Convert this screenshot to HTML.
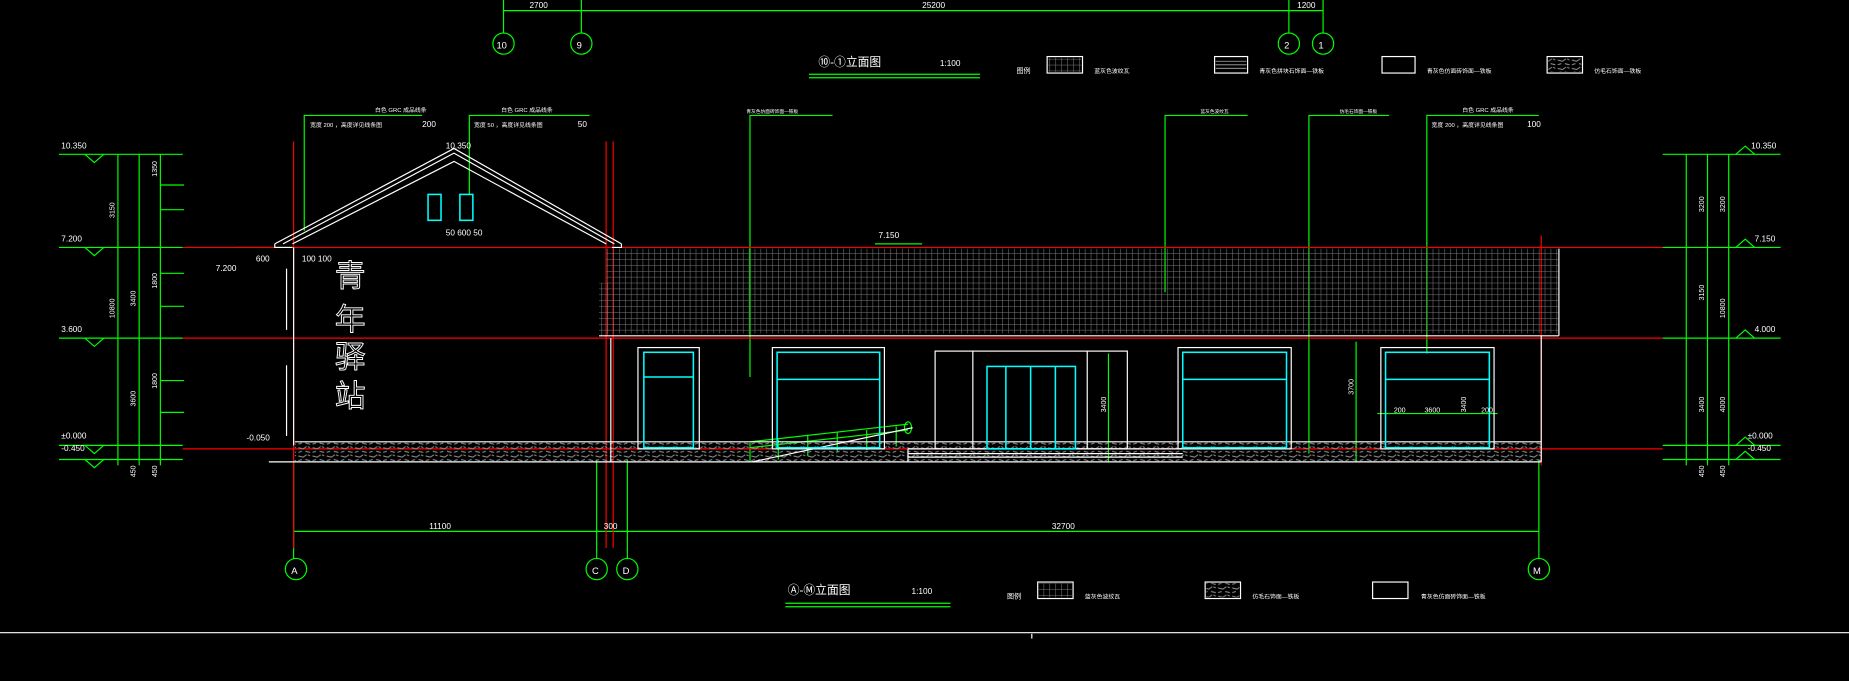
<!DOCTYPE html>
<html><head><meta charset="utf-8"><style>
html,body{margin:0;padding:0;background:#000;width:1849px;height:681px;overflow:hidden}
svg{display:block}
text{font-family:"Liberation Sans Narrow","Liberation Sans","Noto Sans CJK SC",sans-serif;}
</style></head><body>
<svg width="1849" height="681" viewBox="0 0 1568 578" preserveAspectRatio="none" xmlns="http://www.w3.org/2000/svg">
<defs>
<pattern id="tile" width="5" height="5" patternUnits="userSpaceOnUse"><path d="M0 0H5M0 0V5" stroke="#7a7a7a" stroke-width="0.9" fill="none"/></pattern>
<pattern id="stone" width="12" height="7" patternUnits="userSpaceOnUse"><path d="M1 2l4 1 3-2M7 5l4 1M1 6l3-1M9 1l2 1" stroke="#8a8a8a" stroke-width="0.9" fill="none"/></pattern>
</defs>
<rect width="1568" height="578" fill="#000"/>
<g stroke="#00ff00" stroke-width="1" fill="none">
<line x1="427" y1="9" x2="1122" y2="9"/>
<line x1="427" y1="0" x2="427" y2="28"/><line x1="493" y1="0" x2="493" y2="28"/>
<line x1="1093" y1="0" x2="1093" y2="28"/><line x1="1122" y1="0" x2="1122" y2="28"/>
<circle cx="427" cy="37" r="9"/><circle cx="493" cy="37" r="9"/><circle cx="1093" cy="37" r="9"/><circle cx="1122" cy="37" r="9"/>
<line x1="50" y1="131" x2="155" y2="131"/><line x1="50" y1="210" x2="155" y2="210"/>
<line x1="50" y1="287" x2="155" y2="287"/><line x1="50" y1="378" x2="155" y2="378"/>
<line x1="50" y1="390" x2="155" y2="390"/>
<line x1="100" y1="131" x2="100" y2="395"/><line x1="118" y1="131" x2="118" y2="395"/><line x1="136" y1="131" x2="136" y2="395"/>
<path d="M136 157h20M136 178h20M136 232h20M136 260h20M136 323h20M136 350h20"/>
<path d="M72 131l8 7 8-7M72 210l8 7 8-7M72 287l8 7 8-7M72 378l8 7 8-7M72 390l8 7 8-7"/>
<line x1="1410" y1="131" x2="1510" y2="131"/><line x1="1410" y1="210" x2="1510" y2="210"/>
<line x1="1410" y1="287" x2="1510" y2="287"/><line x1="1410" y1="378" x2="1510" y2="378"/>
<line x1="1410" y1="390" x2="1510" y2="390"/>
<line x1="1430" y1="131" x2="1430" y2="395"/><line x1="1448" y1="131" x2="1448" y2="395"/><line x1="1466" y1="131" x2="1466" y2="395"/>
<path d="M1472 131l8-7 8 7M1472 210l8-7 8 7M1472 287l8-7 8 7M1472 378l8-7 8 7M1472 390l8-7 8 7"/>
<line x1="249" y1="451" x2="1305" y2="451"/>
<line x1="249" y1="390" x2="249" y2="474"/><line x1="506" y1="390" x2="506" y2="474"/>
<line x1="532" y1="390" x2="532" y2="474"/><line x1="1305" y1="390" x2="1305" y2="474"/>
<circle cx="251" cy="483" r="9"/><circle cx="506" cy="483" r="9"/><circle cx="532" cy="483" r="9"/><circle cx="1305" cy="483" r="9"/>
<path d="M258 196V98h100M398 165V98h102M636 320V98h70M988 248V98h70M1110 385V98h68M1210 300V98h95"/>
<path d="M742 207h40M200 210h50"/>
<line x1="1150" y1="290" x2="1150" y2="392"/><line x1="1168" y1="351" x2="1270" y2="351"/>
<line x1="940" y1="300" x2="940" y2="392"/>
<path d="M636 375L770 360M636 380L770 365M636 376v16M660 373v17M685 370v17M710 367v17M735 365v17M760 362v17"/>
<ellipse cx="770" cy="363" rx="3" ry="5"/>
<path d="M666 512h140M666 515h140M686 63h145M686 66h145"/>
</g>
<g stroke="#ff0000" stroke-width="1">
<line x1="155" y1="210" x2="1410" y2="210"/><line x1="155" y1="287" x2="1410" y2="287"/>
<line x1="155" y1="381" x2="1410" y2="381"/>
<line x1="249" y1="120" x2="249" y2="465"/><line x1="514" y1="120" x2="514" y2="465"/><line x1="520" y1="120" x2="520" y2="465"/>
<line x1="1307" y1="200" x2="1307" y2="395"/>
</g>
<rect x="514" y="211" width="808" height="72" fill="url(#tile)"/>
<rect x="508" y="240" width="8" height="45" fill="url(#tile)"/>
<rect x="250" y="375" width="1057" height="17" fill="url(#stone)"/>
<g stroke="#fff" stroke-width="1" fill="none">
<path d="M233 207L385 126L527 207M240 207L385 130L521 207M248 207L385 137L514 207"/>
<path d="M233 207v3h15M527 207v3h-8"/>
<line x1="508" y1="285" x2="1322" y2="285"/><line x1="1322" y1="211" x2="1322" y2="285"/>
<line x1="249" y1="210" x2="249" y2="378"/><line x1="243" y1="228" x2="243" y2="280"/><line x1="243" y1="310" x2="243" y2="370"/>
<line x1="1307" y1="285" x2="1307" y2="392"/><line x1="518" y1="287" x2="518" y2="392"/>
<line x1="228" y1="392" x2="1307" y2="392"/><line x1="250" y1="375" x2="1307" y2="375"/>
<rect x="541" y="295" width="52" height="86"/>
<rect x="655" y="295" width="95" height="86"/>
<rect x="793" y="298" width="163" height="83"/>
<line x1="825" y1="298" x2="825" y2="381"/><line x1="922" y1="298" x2="922" y2="381"/>
<rect x="999" y="295" width="96" height="86"/>
<rect x="1171" y="295" width="96" height="86"/>
<path d="M638 392L774 363M770 381h233M770 385h233M770 388h233M770 381v11"/>
<line x1="0" y1="537" x2="1568" y2="537"/><line x1="875" y1="538" x2="875" y2="542"/>
<rect x="888" y="48" width="30" height="14"/><rect x="1030" y="48" width="28" height="14"/>
<rect x="1172" y="48" width="28" height="14"/><rect x="1312" y="48" width="30" height="14"/>
<rect x="880" y="494" width="30" height="14"/><rect x="1022" y="494" width="30" height="14"/><rect x="1164" y="494" width="30" height="14"/>
</g>
<rect x="889" y="49" width="28" height="12" fill="url(#tile)"/>
<rect x="881" y="495" width="28" height="12" fill="url(#tile)"/>
<rect x="1313" y="49" width="28" height="12" fill="url(#stone)"/>
<rect x="1023" y="495" width="28" height="12" fill="url(#stone)"/>
<path d="M1031 52h26M1031 55h26M1031 58h26" stroke="#aaa" stroke-width="0.7"/>
<g stroke="#00ffff" stroke-width="1.3" fill="none">
<rect x="363" y="165" width="11" height="22"/><rect x="390" y="165" width="11" height="22"/>
<rect x="546" y="299" width="42" height="81"/><line x1="546" y1="320" x2="588" y2="320"/>
<rect x="659" y="299" width="87" height="81"/><line x1="659" y1="322" x2="746" y2="322"/>
<rect x="837" y="311" width="75" height="70"/><line x1="853" y1="311" x2="853" y2="381"/><line x1="874" y1="311" x2="874" y2="381"/><line x1="895" y1="311" x2="895" y2="381"/>
<rect x="1003" y="299" width="88" height="81"/><line x1="1003" y1="322" x2="1091" y2="322"/>
<rect x="1175" y="299" width="88" height="81"/><line x1="1175" y1="322" x2="1263" y2="322"/>
</g>
<g fill="none" stroke="#fff" stroke-width="0.8" font-size="26" font-family="'Noto Serif CJK SC',serif">
<text x="284" y="243">青</text><text x="284" y="280">年</text><text x="284" y="312">驿</text><text x="284" y="345">站</text>
</g>
<g fill="#fff" font-size="7">
<text x="449" y="7">2700</text><text x="782" y="7">25200</text><text x="1100" y="7">1200</text>
<text x="421" y="41" font-size="8">10</text><text x="489" y="41" font-size="8">9</text><text x="1089" y="41" font-size="8">2</text><text x="1118" y="41" font-size="8">1</text>
<text x="694" y="56" font-size="10">⑩-①立面图</text><text x="797" y="56">1:100</text>
<text x="862" y="62" font-size="6">图例</text><text x="928" y="62" font-size="5">蓝灰色波纹瓦</text>
<text x="1068" y="62" font-size="5">青灰色拼块石饰面—铁板</text><text x="1210" y="62" font-size="5">青灰色仿面砖饰面—铁板</text><text x="1352" y="62" font-size="5">仿毛石饰面—铁板</text>
<text x="52" y="126">10.350</text><text x="52" y="205">7.200</text><text x="52" y="282">3.600</text><text x="52" y="372">±0.000</text><text x="52" y="383">-0.450</text>
<text x="1485" y="126">10.350</text><text x="1488" y="205">7.150</text><text x="1488" y="282">4.000</text><text x="1482" y="372">±0.000</text><text x="1482" y="383">-0.450</text>
<text x="378" y="126">10.350</text><text x="745" y="202">7.150</text><text x="183" y="230">7.200</text><text x="209" y="374">-0.050</text>
<text x="217" y="222">600</text><text x="256" y="222">100 100</text><text x="378" y="200">50 600 50</text>
<text x="318" y="95" font-size="5">白色 GRC 成品线条</text><text x="263" y="108" font-size="5">宽度 200 ，高度详见线条图</text><text x="358" y="108">200</text>
<text x="425" y="95" font-size="5">白色 GRC 成品线条</text><text x="402" y="108" font-size="5">宽度 50 ，高度详见线条图</text><text x="490" y="108">50</text>
<text x="633" y="96" font-size="4">青灰色仿面砖饰面—铁板</text><text x="1018" y="96" font-size="4">蓝灰色波纹瓦</text><text x="1136" y="96" font-size="4">仿毛石饰面—铁板</text>
<text x="1240" y="95" font-size="5">白色 GRC 成品线条</text><text x="1214" y="108" font-size="5">宽度 200 ，高度详见线条图</text><text x="1295" y="108">100</text>
<text x="1182" y="350" font-size="6">200</text><text x="1208" y="350" font-size="6">3600</text><text x="1256" y="350" font-size="6">200</text>
<text x="364" y="449">11100</text><text x="512" y="449">300</text><text x="892" y="449">32700</text>
<text x="247" y="487" font-size="8">A</text><text x="502" y="487" font-size="8">C</text><text x="528" y="487" font-size="8">D</text><text x="1300" y="487" font-size="8">M</text>
<text x="668" y="504" font-size="10">Ⓐ-Ⓜ立面图</text><text x="773" y="504">1:100</text>
<text x="854" y="508" font-size="6">图例</text><text x="920" y="508" font-size="5">蓝灰色波纹瓦</text>
<text x="1062" y="508" font-size="5">仿毛石饰面—铁板</text><text x="1205" y="508" font-size="5">青灰色仿面砖饰面—铁板</text>
</g>
<g fill="#fff" font-size="6">
<text transform="translate(97,185) rotate(-90)">3150</text><text transform="translate(97,270) rotate(-90)">10800</text>
<text transform="translate(115,260) rotate(-90)">3400</text><text transform="translate(115,345) rotate(-90)">3600</text>
<text transform="translate(133,150) rotate(-90)">1350</text><text transform="translate(133,245) rotate(-90)">1800</text><text transform="translate(133,330) rotate(-90)">1800</text>
<text transform="translate(115,405) rotate(-90)">450</text><text transform="translate(133,405) rotate(-90)">450</text>
<text transform="translate(1445,180) rotate(-90)">3200</text><text transform="translate(1463,180) rotate(-90)">3200</text>
<text transform="translate(1445,255) rotate(-90)">3150</text><text transform="translate(1463,270) rotate(-90)">10800</text>
<text transform="translate(1445,350) rotate(-90)">3400</text><text transform="translate(1463,350) rotate(-90)">4000</text>
<text transform="translate(1445,405) rotate(-90)">450</text><text transform="translate(1463,405) rotate(-90)">450</text>
<text transform="translate(938,350) rotate(-90)">3400</text><text transform="translate(1148,335) rotate(-90)">3700</text>
<text transform="translate(1243,350) rotate(-90)">3400</text>
</g>
</svg>
</body></html>
